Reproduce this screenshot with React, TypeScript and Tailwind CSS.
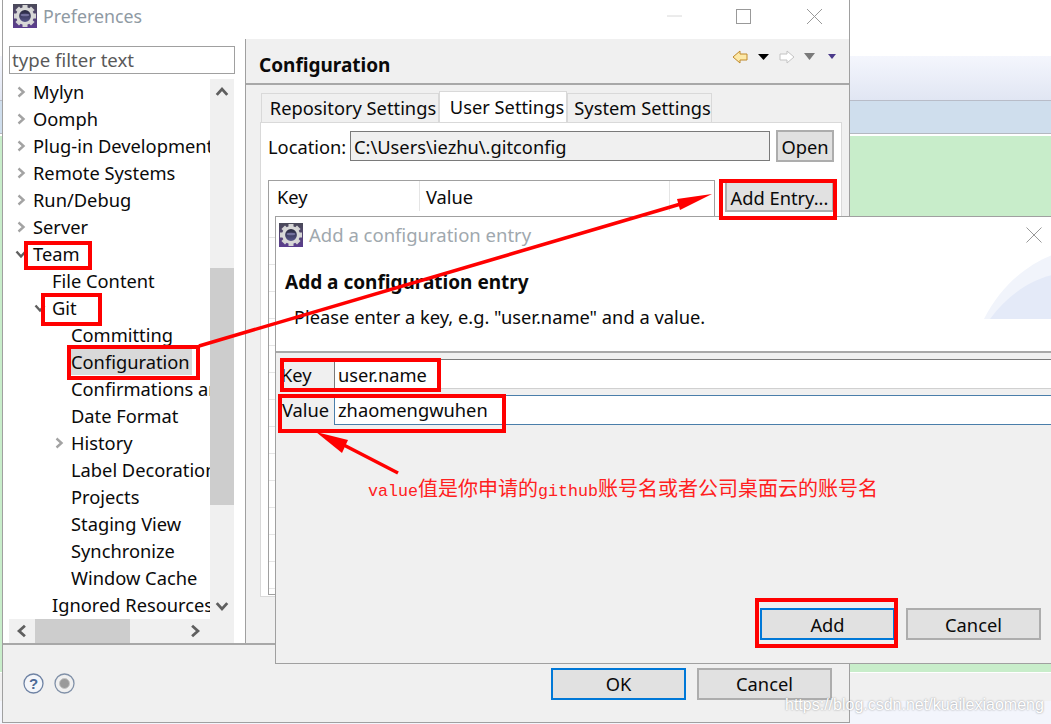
import React from "react";

const font = { fontFamily: '"Noto Sans", sans-serif' };

function GearIcon({ size = 24 }: { size?: number }) {
  const teeth = Array.from({ length: 8 }, (_, i) => i * 45);
  return (
    <svg width={size} height={size} viewBox="0 0 24 24" className="shrink-0">
      <defs>
        <linearGradient id="gearBg" x1="0" y1="0" x2="0" y2="1">
          <stop offset="0" stopColor="#4a4a58" />
          <stop offset="1" stopColor="#5b3d8f" />
        </linearGradient>
        <linearGradient id="gearIn" x1="0" y1="0" x2="0" y2="1">
          <stop offset="0" stopColor="#222235" />
          <stop offset="1" stopColor="#5c5a92" />
        </linearGradient>
      </defs>
      <rect width="24" height="24" fill="url(#gearBg)" />
      {teeth.map((a) => (
        <rect key={a} x="9.5" y="1" width="5" height="5" fill="#d4d4d4" transform={`rotate(${a} 12 12)`} />
      ))}
      <circle cx="12" cy="12" r="7.4" fill="url(#gearIn)" stroke="#d8d8d8" strokeWidth="3" />
      <ellipse cx="12" cy="11" rx="4.4" ry="1.3" fill="#8a88b8" opacity="0.7" />
    </svg>
  );
}

function Chevron({ dir, color = "#5f5f5f", size = 12, w = 2.4 }: { dir: "up" | "down" | "left" | "right"; color?: string; size?: number; w?: number }) {
  const pts = {
    up: "1.5,8.5 6,3.5 10.5,8.5",
    down: "1.5,3.5 6,8.5 10.5,3.5",
    left: "8.5,1.5 3.5,6 8.5,10.5",
    right: "3.5,1.5 8.5,6 3.5,10.5",
  }[dir];
  return (
    <svg width={size} height={size} viewBox="0 0 12 12" className="shrink-0">
      <polyline points={pts} fill="none" stroke={color} strokeWidth={w} />
    </svg>
  );
}

type Row = { label: string; level: number; arrow?: "right" | "down"; selected?: boolean };
const rows: Row[] = [
  { label: "Mylyn", level: 0, arrow: "right" },
  { label: "Oomph", level: 0, arrow: "right" },
  { label: "Plug-in Development", level: 0, arrow: "right" },
  { label: "Remote Systems", level: 0, arrow: "right" },
  { label: "Run/Debug", level: 0, arrow: "right" },
  { label: "Server", level: 0, arrow: "right" },
  { label: "Team", level: 0, arrow: "down" },
  { label: "File Content", level: 1 },
  { label: "Git", level: 1, arrow: "down" },
  { label: "Committing", level: 2 },
  { label: "Configuration", level: 2, selected: true },
  { label: "Confirmations and Warnings", level: 2 },
  { label: "Date Format", level: 2 },
  { label: "History", level: 2, arrow: "right" },
  { label: "Label Decorations", level: 2 },
  { label: "Projects", level: 2 },
  { label: "Staging View", level: 2 },
  { label: "Synchronize", level: 2 },
  { label: "Window Cache", level: 2 },
  { label: "Ignored Resources", level: 1 },
];

const indent = ["w-[24px]", "w-[43px]", "w-[62px]"];

function TreeRow({ row }: { row: Row }) {
  return (
    <div className="flex h-[27px] items-center whitespace-nowrap pb-[2px]">
      <div className={`${indent[row.level]} flex shrink-0 items-center justify-end pr-[6px]`}>
        {row.arrow === "right" && <Chevron dir="right" color="#a3a3a3" />}
        {row.arrow === "down" && <Chevron dir="down" color="#606060" />}
      </div>
      <span className={row.selected ? "-ml-[2px] bg-[#d9d9d9] px-[2px] leading-[27px]" : "leading-[27px]"}>{row.label}</span>
    </div>
  );
}

function Btn({ children, primary, className = "" }: { children: React.ReactNode; primary?: boolean; className?: string }) {
  return (
    <div
      className={`flex h-[32px] items-center justify-center bg-[#e1e1e1] ${
        primary ? "border-2 border-[#0078d7]" : "border-2 border-[#adadad]"
      } ${className}`}
    >
      {children}
    </div>
  );
}

function Box({ x, y, w, h }: { x: number; y: number; w: number; h: number }) {
  return <rect x={x + 0.5} y={y + 0.5} width={w - 1} height={h - 1} fill="none" stroke="#ff0000" strokeWidth="4" />;
}

export default function App() {
  return (
    <div style={font} className="relative h-[724px] w-[1051px] overflow-hidden bg-white text-[18.3px] text-[#0a0a0a]">
      {/* desktop behind the windows */}
      <div className="flex h-full flex-col">
        <div className="h-[56px] bg-white" />
        <div className="h-[45px] border-b border-[#b8bcc8] bg-gradient-to-b from-[#f4f6fd] to-[#e1e6f3]" />
        <div className="h-[33px] border-b border-[#b4b8c0] bg-[#cfdeed]" />
        <div className="h-[2px] bg-white" />
        <div className="h-[536px] bg-[#c8edca]" />
        <div className="h-[1px] bg-white" />
        <div className="h-[28px] bg-[#f0f0f0]" />
        <div className="flex-1 bg-[#f3f5fc]" />
      </div>

      {/* Preferences window */}
      <div className="absolute left-[2px] top-0 flex h-[723px] w-[848px] flex-col border-x border-b border-[#a0a0a0] bg-white">
        <div className="flex h-[39px] shrink-0 items-center pb-[7px] pl-[10px]">
          <GearIcon />
          <span className="ml-[6px] text-[17.8px] text-[#8f9aa3]">Preferences</span>
          <div className="ml-auto flex items-center">
            <svg width="170" height="24" viewBox="0 0 170 24">
              <line x1="0" y1="12" x2="15" y2="12" stroke="#d8d8d8" />
              <rect x="69.5" y="5.5" width="14" height="14" fill="none" stroke="#999" />
              <path d="M140 5 L155 20 M155 5 L140 20" stroke="#999" fill="none" />
            </svg>
            <div className="w-[12px]" />
          </div>
        </div>

        <div className="flex min-h-0 flex-1">
          {/* left pane */}
          <div className="flex w-[243px] shrink-0 flex-col border-r border-[#a0a0a0] pl-[6px] pt-[7px]">
            <div className="flex h-[28px] w-[226px] items-center border border-[#a0a0a0] pl-[2px] text-[18.6px] text-[#595959]">type filter text</div>
            <div className="mt-[5px] flex h-[540px] w-[225px]">
              <div className="w-[201px] overflow-hidden">
                {rows.map((r) => (
                  <TreeRow key={r.label} row={r} />
                ))}
              </div>
              <div className="flex w-[24px] flex-col bg-[#f0f0f0]">
                <div className="flex h-[27px] items-center justify-center pb-[1px]"><Chevron dir="up" size={14} /></div>
                <div className="mt-[162px] h-[237px] bg-[#cdcdcd]" />
                <div className="mt-[87px] flex h-[27px] items-center justify-center"><Chevron dir="down" size={14} /></div>
              </div>
            </div>
            <div className="flex h-[24px] w-[225px] bg-[#f0f0f0]">
              <div className="flex w-[26px] items-center justify-center"><Chevron dir="left" size={14} /></div>
              <div className="w-[95px] bg-[#cdcdcd]" />
              <div className="flex flex-1 items-center justify-end pr-[32px]"><Chevron dir="right" size={14} /></div>
            </div>
          </div>

          {/* right pane */}
          <div className="flex min-w-0 flex-1 flex-col bg-[#f0f0f0]">
            <div className="flex h-[46px] shrink-0 items-center border-b-2 border-[#a8a8a8] px-[13px] pt-[8px]">
              <span className="text-[19px] font-bold">Configuration</span>
              <div className="-mt-[17px] ml-auto flex items-center">
                <svg width="104" height="14" viewBox="0 0 104 14">
                  <path d="M1 7 L8 1 V4 H15 V10 H8 V13 Z" fill="#fde9a8" stroke="#c08a2c" />
                  <path d="M26 4 H37 L31.5 10 Z" fill="#000" />
                  <path d="M62 7 L55 1 V4 H48 V10 H55 V13 Z" fill="#fff" stroke="#c4c4c4" />
                  <path d="M72 3 H83 L77.5 10 Z" fill="#7a7a7a" />
                  <path d="M96 4 H104 L100 9 Z" fill="#4a3a8a" />
                </svg>
              </div>
            </div>
            <div className="flex h-[37px] shrink-0 items-end pl-[15px]">
              <div className="flex h-[29px] w-[178px] items-center justify-center border border-b-0 border-[#d9d9d9] pl-[6px] whitespace-nowrap">Repository Settings</div>
              <div className="flex h-[31px] w-[128px] items-center justify-center border border-b-0 border-[#d9d9d9] bg-white pl-[8px] whitespace-nowrap">User Settings</div>
              <div className="flex h-[29px] w-[145px] items-center justify-center border border-b-0 border-[#d9d9d9] pl-[6px] whitespace-nowrap">System Settings</div>
            </div>
            <div className="ml-[14px] h-[475px] w-[582px] border border-[#d9d9d9] bg-white pl-[7px] pr-[7px]">
              <div className="mt-[7px] flex h-[32px] items-center">
                <span className="w-[82px] whitespace-nowrap pt-[1px]">Location:</span>
                <div className="flex h-[30px] w-[420px] items-center border border-[#7a7a7a] bg-[#f0f0f0] pl-[3px] pt-[1px]">C:\Users\iezhu\.gitconfig</div>
                <Btn className="ml-[6px] w-[58px] pt-[1px]">Open</Btn>
              </div>
              <div className="mt-[18px] flex items-start">
                <div className="h-[415px] w-[447px] overflow-hidden border border-[#a0a0a0]">
                  <div className="flex h-[30px] items-start">
                    <span className="h-[30px] w-[151px] border-r border-[#e5e5e5] pl-[8px] pt-[1px] leading-[30px]">Key</span>
                    <span className="h-[30px] w-[250px] border-r border-[#e5e5e5] pl-[6px] pt-[1px] leading-[30px]">Value</span>
                  </div>
                  {Array.from({ length: 14 }, (_, i) => (
                    <div key={i} className="h-[27px] border-b border-[#e5e5e5]" />
                  ))}
                </div>
                <Btn className="ml-[10px] w-[109px] whitespace-nowrap pt-[3px]">Add Entry...</Btn>
              </div>
            </div>
          </div>
        </div>

        <div className="flex h-[79px] shrink-0 border-t-2 border-[#a8a8a8] bg-[#f0f0f0]">
          <div className="flex h-[76px] items-center gap-[10px] pl-[20px]">
            <svg width="21" height="21" viewBox="0 0 21 21">
              <circle cx="10.5" cy="10.5" r="9.5" fill="#f4f6fa" stroke="#6f83a4" strokeWidth="1.3" />
              <text x="10.5" y="16" textAnchor="middle" fontSize="15" fontWeight="700" fill="#4d6a96" fontFamily="Liberation Sans">?</text>
            </svg>
            <svg width="21" height="21" viewBox="0 0 21 21">
              <circle cx="10.5" cy="10.5" r="9.5" fill="#f0f0f0" stroke="#8191a8" strokeWidth="1.3" />
              <circle cx="10.5" cy="10.5" r="5" fill="#9a9a9a" stroke="#c4c4c4" />
            </svg>
          </div>
          <div className="ml-auto flex gap-[11px] pt-[23px] pr-[17px]">
            <Btn primary className="h-[32px] w-[135px]">OK</Btn>
            <Btn className="h-[32px] w-[135px]">Cancel</Btn>
          </div>
        </div>
      </div>

      {/* Add a configuration entry dialog */}
      <div className="absolute left-[275px] top-[216px] flex h-[448px] w-[790px] flex-col border border-[#a0a0a0] bg-white">
        <div className="relative flex h-[136px] shrink-0 flex-col border-b-2 border-[#a8a8a8]">
          <svg className="absolute left-[700px] top-[30px]" width="90" height="72" viewBox="0 0 90 72">
            <path d="M8 72 C24 40 50 18 76 8 V72 Z" fill="#f1f4fb" />
            <path d="M14 72 C30 50 52 34 76 28 V72 Z" fill="#e4eaf8" />
          </svg>
          <div className="flex h-[36px] items-center pl-[3px] pr-[22px]">
            <GearIcon />
            <span className="ml-[6px] whitespace-nowrap text-[18.5px] text-[#a0a8ae]">Add a configuration entry</span>
            <svg className="ml-auto" width="16" height="16" viewBox="0 0 16 16">
              <path d="M0.5 0.5 L15.5 15.5 M15.5 0.5 L0.5 15.5" stroke="#999" fill="none" />
            </svg>
          </div>
          <div className="relative mt-[16px] pl-[9px] text-[19px] font-bold leading-[26px]">Add a configuration entry</div>
          <div className="relative mt-[9px] pl-[18px] leading-[26px]">Please enter a key, e.g. "user.name" and a value.</div>
        </div>
        <div className="flex-1 bg-[#f0f0f0] pt-[6px]">
          <div className="flex h-[30px] items-center">
            <span className="w-[58px] pl-[5px] pt-[1px]">Key</span>
            <div className="flex h-[30px] flex-1 items-center border-y border-l border-[#7a7a7a] border-b-[#d0d0d0] bg-white pl-[3px] pt-[1px]">user.name</div>
          </div>
          <div className="mt-[6px] flex h-[30px] items-center">
            <span className="w-[58px] pl-[6px]">Value</span>
            <div className="flex h-[30px] flex-1 items-center border-y border-l border-[#4a7eaa] bg-white pl-[3px]">zhaomengwuhen</div>
          </div>
          <div className="mt-[183px] flex gap-[11px] pl-[484px]">
            <Btn primary className="w-[135px] pt-[1px]">Add</Btn>
            <Btn className="w-[135px] pt-[1px]">Cancel</Btn>
          </div>
        </div>
      </div>

      {/* red annotations */}
      <svg className="pointer-events-none absolute left-0 top-0" width="1051" height="724" viewBox="0 0 1051 724">
        <Box x={25.5} y={242.5} w={65} h={26} />
        <Box x={42.5} y={294.5} w={58} h={30} />
        <Box x={68.5} y={346.5} w={130} h={32} />
        <Box x={720.5} y={180.5} w={115} h={38} />
        <Box x={281.5} y={359.5} w={158} h={31} />
        <Box x={279.5} y={395.5} w={225} h={36} />
        <Box x={756.5} y={599.5} w={140} h={47} />
        <line x1="199" y1="346" x2="684" y2="203" stroke="#ff0000" strokeWidth="3.5" />
        <polygon points="712,194 677,199 680,210" fill="#ff0000" />
        <line x1="398" y1="473" x2="338" y2="442" stroke="#ff0000" strokeWidth="3.5" />
        <polygon points="316,432 348,440 342,453" fill="#ff0000" />
      </svg>
      <div className="absolute left-[368px] top-[478px] flex h-[26px] items-center whitespace-nowrap text-[#ff2020]" style={{ fontFamily: '"Liberation Mono", "Noto Sans CJK SC", monospace', fontSize: 20 }}>
        <span className="text-[16.67px]">value</span>
        <span>值是你申请的</span>
        <span className="text-[16.67px]">github</span>
        <span>账号名或者公司桌面云的账号名</span>
      </div>
      <div className="absolute left-[785px] top-[693px] whitespace-nowrap text-[16px] text-white [text-shadow:0_0_2px_#8a8a8a]" style={{ fontFamily: '"Liberation Sans", sans-serif' }}>
        https://blog.csdn.net/kuailexiaomeng
      </div>
    </div>
  );
}
